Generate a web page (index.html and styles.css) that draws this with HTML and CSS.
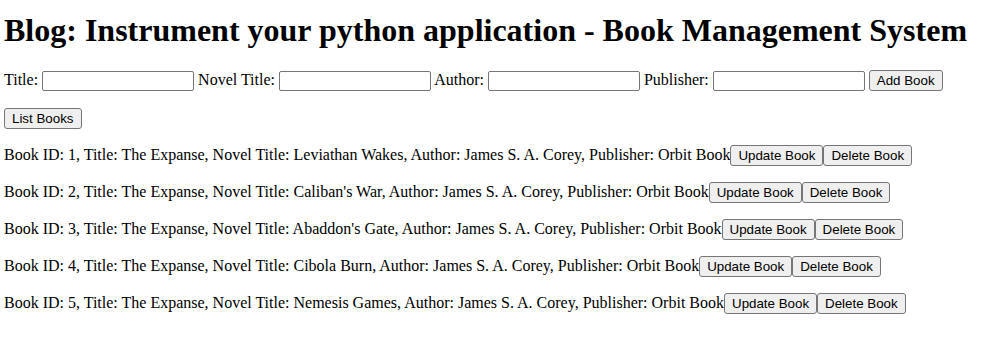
FILE: index.html
```html
<!DOCTYPE html>
<html>
<head>
  <meta charset="UTF-8">
  <title>Book Management System</title>
  <link rel="stylesheet" href="styles.css">
</head>
<body>
  <h1>Blog: Instrument your python application - Book Management System</h1>
  <form id="bookForm" class="book-form">
    <label for="title">Title:</label>
    <input type="text" id="title">
    <label for="novelTitle">Novel Title:</label>
    <input type="text" id="novelTitle">
    <label for="author">Author:</label>
    <input type="text" id="author">
    <label for="publisher">Publisher:</label>
    <input type="text" id="publisher">
    <button type="button">Add Book</button>
  </form>
  <div class="list-actions">
    <button type="button">List Books</button>
  </div>
  <div id="bookList">
    <p class="book">Book ID: 1, Title: The Expanse, Novel Title: Leviathan Wakes, Author: James S. A. Corey, Publisher: Orbit Book<button type="button">Update Book</button><button type="button">Delete Book</button></p>
    <p class="book">Book ID: 2, Title: The Expanse, Novel Title: Caliban's War, Author: James S. A. Corey, Publisher: Orbit Book<button type="button">Update Book</button><button type="button">Delete Book</button></p>
    <p class="book">Book ID: 3, Title: The Expanse, Novel Title: Abaddon's Gate, Author: James S. A. Corey, Publisher: Orbit Book<button type="button">Update Book</button><button type="button">Delete Book</button></p>
    <p class="book">Book ID: 4, Title: The Expanse, Novel Title: Cibola Burn, Author: James S. A. Corey, Publisher: Orbit Book<button type="button">Update Book</button><button type="button">Delete Book</button></p>
    <p class="book">Book ID: 5, Title: The Expanse, Novel Title: Nemesis Games, Author: James S. A. Corey, Publisher: Orbit Book<button type="button">Update Book</button><button type="button">Delete Book</button></p>
  </div>
</body>
</html>
```

FILE: styles.css
```css
body {
  font-family: "Liberation Serif", "Times New Roman", serif;
  font-size: 16px;
  margin: 0 4px;
  color: #000;
  background: #fff;
}
h1 {
  font-size: 32px;
  font-weight: bold;
  margin: 12px 0 21px;
}
.book-form {
  margin: 0 0 17px;
}
input[type="text"] {
  font-family: "Liberation Sans", Arial, sans-serif;
  font-size: 13px;
  width: 148px;
  height: 16px;
  padding: 1px;
  margin: 0;
  border: 1px solid #767676;
  border-radius: 2px;
  vertical-align: baseline;
}
button {
  font-family: "Liberation Sans", Arial, sans-serif;
  font-size: 13.33px;
  color: #000;
  background: #efefef;
  border: 1px solid #767676;
  border-radius: 3px;
  padding: 2px 7px;
  margin: 0;
}
.book {
  margin: 16px 0;
}
```
